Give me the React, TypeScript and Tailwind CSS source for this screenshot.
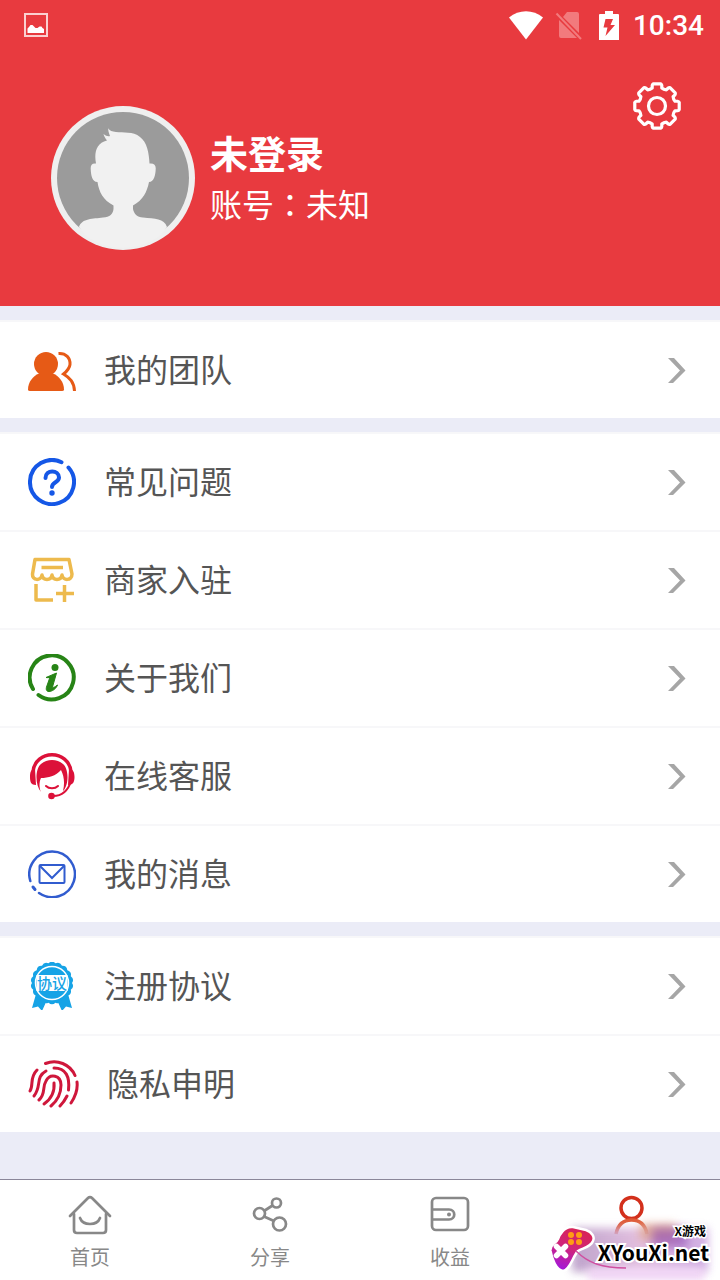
import type { ReactNode } from "react";

const RED = "#e83a3f";

function gearPath(cx: number, cy: number, outer: number, root: number) {
  const point = (r: number, deg: number) => {
    const a = ((deg - 90) * Math.PI) / 180;
    return `${(cx + r * Math.cos(a)).toFixed(2)} ${(cy + r * Math.sin(a)).toFixed(2)}`;
  };
  let d = "";
  for (let i = 0; i < 8; i++) {
    const c = i * 45;
    d += `${i === 0 ? "M" : "L"}${point(root, c - 15)}`;
    d += `L${point(outer - 1, c - 13)}Q${point(outer, c - 12)} ${point(outer + 0.3, c - 9)}`;
    d += `L${point(outer + 0.3, c + 9)}Q${point(outer, c + 12)} ${point(outer - 1, c + 13)}`;
    d += `L${point(root, c + 15)}Q${point(root - 1, c + 22.5)} ${point(root, c + 30)}`;
  }
  return d + "Z";
}

function sealPath(cx: number, cy: number, outer: number, inner: number, lobes: number) {
  const at = (r: number, k: number) => {
    const a = (k * Math.PI) / lobes;
    return `${(cx + r * Math.sin(a)).toFixed(2)} ${(cy - r * Math.cos(a)).toFixed(2)}`;
  };
  let d = `M${at(inner, -1)}`;
  for (let i = 0; i < lobes; i++) {
    d += `Q${at(outer, i * 2)} ${at(inner, i * 2 + 1)}`;
  }
  return d + "Z";
}

function StatusBar() {
  return (
    <div className="flex h-[52px] items-center justify-between pr-4 pl-6">
      <svg width="24" height="26" viewBox="0 0 24 26" aria-hidden="true">
        <rect x="1" y="1" width="22" height="22" fill="none" stroke="#fbd0d0" strokeWidth="2" />
        <path d="M3.500 20v-4.500l1.500-1.500 1.500-2h2l2 2 1 1h2l2-1.500h2l1 1.500 1.500 1v4z" fill="#fff" />
      </svg>
      <div className="flex items-center">
        <svg width="34" height="31" viewBox="0 0 34 31" aria-hidden="true">
          <path d="M0 6.500C10-2 24-2 34 6.500L17 28.500z" fill="#fff" />
        </svg>
        <svg className="ml-3" width="28" height="30" viewBox="0 0 28 30" aria-hidden="true">
          <path d="M12 1h10a2 2 0 0 1 2 2v19L8 6zM4 9l18 18H6a2 2 0 0 1-2-2z" fill="#f27a7d" />
          <path d="M1.500 2.500L26 28" stroke="#f27a7d" strokeWidth="2" />
        </svg>
        <svg className="ml-4" width="20" height="30" viewBox="0 0 20 30" aria-hidden="true">
          <path d="M6 0h8v3h5a1 1 0 0 1 1 1v25H0V4a1 1 0 0 1 1-1h5z" fill="#fff" />
          <path d="M6.500 8H14l-2.500 6H16L6.500 25l2-8.500H4.500z" fill={RED} />
        </svg>
        <span className="ml-[14px] font-[Roboto,sans-serif] text-[28px] leading-8 font-medium">10:34</span>
      </div>
    </div>
  );
}

function Avatar() {
  return (
    <svg width="144" height="144" viewBox="0 0 144 144" aria-hidden="true">
      <circle cx="72" cy="72" r="72" fill="#efefef" />
      <circle cx="72" cy="72" r="66" fill="#9b9b9b" />
      <path
        d="M57.300 22.300C59 25 61 25.500 65 26C72 27 82 25 89 31C96 36 98 47 98.500 57.500C103 57 105 59 104.700 63C104.500 69 103 76 98 76C96 86 92 94 82 99.500V103C83 108 86 111 92 111.500C104 113 113 112 116 121L110 129C88 146 56 146 34 129L28 121C31 112 42 113 52 111.500C59 111 62 108 62.500 103V99.500C52 94 48 86 46.500 76C41 76 40 69 39.700 63C39.500 59 41 57 45 57.500C43 47 45 37 56 34.500C54 32 53 30 52.500 28C55 30 57 30.500 59 30C58 27 57 25 57.300 22.300Z"
        fill="#f1f1f1"
      />
    </svg>
  );
}

function TeamIcon() {
  return (
    <svg width="48" height="48" viewBox="0 0 48 48" fill="none" aria-hidden="true">
      <circle cx="18" cy="18" r="12" fill="#e65a16" />
      <path d="M0 43.500C0 36 5 30 11 27.500H25C31 30 36 36 36 43.500Q36 45 34 45H2Q0 45 0 43.500z" fill="#e65a16" />
      <path d="M30.500 7.500C38 7 42.500 12 42 18.500C41.500 23 38 26 35.500 28C42 32 46 36 46.500 45" stroke="#e65a16" strokeWidth="3" />
    </svg>
  );
}

function QuestionIcon() {
  return (
    <svg width="48" height="48" viewBox="0 0 48 48" fill="none" stroke="#1557e6" strokeLinecap="round" aria-hidden="true">
      <path d="M33.500 4.200A22 22 0 1 0 40.500 9.500" strokeWidth="4" />
      <path d="M17.500 20C17.500 11 31 11.500 31 19.500C31 24.500 24 24 24 29" strokeWidth="4" />
      <circle cx="24" cy="35" r="2.700" fill="#1557e6" stroke="none" />
    </svg>
  );
}

function ShopIcon() {
  return (
    <svg width="48" height="48" viewBox="0 0 48 48" fill="none" stroke="#edba4d" strokeWidth="3.500" strokeLinejoin="round" aria-hidden="true">
      <path d="M7 3.500H41L44 18C44 25 35 25 34 19C33 25 25 25 24 19C23 25 15 25 14 19C13 25 4 25 4.500 18z" />
      <path d="M13.500 11.500H35" />
      <path d="M8 28V44H25M36.500 29V46M28 37.500H46" />
    </svg>
  );
}

function InfoIcon() {
  return (
    <svg width="48" height="48" viewBox="0 0 48 48" fill="none" stroke="#278416" aria-hidden="true">
      <path d="M5 35A22 22 0 1 1 10.500 41" strokeWidth="4" strokeLinecap="round" />
      <circle cx="27" cy="13.500" r="3.500" fill="#278416" stroke="none" />
      <path d="M18 23.500L28.500 19L24.500 33C25 34 27 33 29.500 31C28 35 24 37.500 21 37.500C18 37.500 18 35 18.500 33L21.500 24.500C21 23 19.500 24 18 23.500Z" fill="#278416" stroke="#278416" />
    </svg>
  );
}

function ServiceIcon() {
  return (
    <svg width="48" height="48" viewBox="0 0 48 48" fill="none" aria-hidden="true">
      <path d="M5 20C7-3 41-3 43 20" stroke="#dc1139" strokeWidth="3.500" />
      <path d="M7 17C3 17 2 20 2 25C2 30 3 33 8 33zM41 17C45 17 46.500 20 46.500 25C46.500 30 45 33 40 33z" fill="#dc1139" />
      <path d="M13 40C7 33 7 17 13 12C19 6.500 29 6.500 35 12C41 17 41 33 35 39C37 31 36 24 33 18C28 24 20 26 13 26C11 30 11 36 13 40z" fill="#dc1139" />
      <path d="M18 34C21 37 27 37 30 34" stroke="#dc1139" strokeWidth="2" strokeLinecap="round" />
      <path d="M43 29C40 39 34 44 25 44" stroke="#dc1139" strokeWidth="2" />
      <circle cx="23.500" cy="44" r="3.300" fill="#dc1139" />
    </svg>
  );
}

function MailIcon() {
  return (
    <svg width="48" height="48" viewBox="0 0 48 48" fill="none" stroke="#315ccf" strokeWidth="2.500" strokeLinecap="round" aria-hidden="true">
      <path d="M2.300 31A22.800 22.800 0 1 1 11 43" />
      <path d="M5 37L7 39.500" strokeWidth="3" />
      <rect x="11.500" y="15" width="25" height="18" rx="1" strokeWidth="2" />
      <path d="M12 16L24 28L36 16" strokeWidth="2" />
    </svg>
  );
}

function AgreementIcon() {
  return (
    <svg width="48" height="48" viewBox="0 0 48 48" aria-hidden="true">
      <path d="M8 32L4 46L10 44.500L14 49L19 38zM40 32L44 46L38 44.500L34 49L29 38z" fill="#16a3e6" />
      <path d={sealPath(24, 21, 23, 20, 18)} fill="#16a3e6" />
      <circle cx="24" cy="21" r="16.500" fill="#16a3e6" stroke="#fff" strokeWidth="1.500" />
      <path d="M8.500 13H39.500V29H8.500z" fill="#fff" />
      <text x="24" y="26.500" textAnchor="middle" fontSize="15" fontWeight="500" fontFamily="'Noto Sans CJK SC', sans-serif" fill="#16a3e6">
        协议
      </text>
    </svg>
  );
}

function FingerprintIcon() {
  return (
    <svg width="51" height="48" viewBox="0 0 51 48" fill="none" stroke="#cf173b" strokeWidth="3" strokeLinecap="round" aria-hidden="true">
      <path d="M17.500 3.500C29-1 42 4 47 15.500" />
      <path d="M9 10C1 18 6 25 2 31" />
      <path d="M18 11C7 17 14 26 6 36" />
      <path d="M26 8C38 8 42 17 40.500 30" />
      <path d="M49 22C50 30 47 37 43 43" />
      <path d="M11 40C18 34 14 27 18 21C22 13 33 15 33 25C33 35 29 41 23 46" />
      <path d="M26 23C27 33 23 39 16 44" />
      <path d="M39 36C37 40 35 43 32 46" />
    </svg>
  );
}

function Row({ icon, label }: { icon: ReactNode; label: string }) {
  return (
    <li>
      <a href="#" className="flex h-[98px] items-center gap-7 border-t-2 border-[#f7f7f9] bg-white pr-[34px] pl-7">
        {icon}
        <span className="flex-1 pb-1 text-[32px] leading-10 text-[#555]">{label}</span>
        <svg width="18" height="26" viewBox="0 0 18 26" aria-hidden="true">
          <path d="M0 1H6L17.500 13.500L5 26H0L12 13.500z" fill="#a6a6a6" />
        </svg>
      </a>
    </li>
  );
}

function Tab({ label, children }: { label: string; children: ReactNode }) {
  return (
    <a href="#" className="flex flex-1 flex-col items-center gap-[7px] pt-[14px] text-xl leading-7 text-[#888]">
      {children}
      <span>{label}</span>
    </a>
  );
}

function TabBar() {
  return (
    <nav className="relative mt-auto flex h-[101px] overflow-hidden border-t border-[#8a8699] bg-white">
      <Tab label="首页">
        <svg width="44" height="42" viewBox="0 0 44 42" fill="none" stroke="#888" strokeWidth="2.700" strokeLinecap="round" strokeLinejoin="round" aria-hidden="true">
          <path d="M2 22L20 4Q22 2 24 4L42 22" />
          <path d="M6 20V36Q6 39 9 39H35Q38 39 38 36V20" />
          <path d="M12 24C15 32 29 32 32 24" />
        </svg>
      </Tab>
      <Tab label="分享">
        <svg width="44" height="42" viewBox="0 0 44 42" fill="none" stroke="#888" strokeWidth="2.700" aria-hidden="true">
          <circle cx="11.500" cy="19.500" r="5.500" />
          <circle cx="28.500" cy="9" r="4.500" />
          <circle cx="31.500" cy="30" r="6.500" />
          <path d="M16 17L24.500 11.500M16 22.500L26 27" />
        </svg>
      </Tab>
      <Tab label="收益">
        <svg width="44" height="42" viewBox="0 0 44 42" fill="none" stroke="#888" strokeWidth="2.700" aria-hidden="true">
          <rect x="4" y="4" width="36" height="32" rx="4" />
          <path d="M4 15.500H21C28 15.500 28 25.500 21 25.500H4" />
          <circle cx="21" cy="20.500" r="2" fill="#888" stroke="none" />
        </svg>
      </Tab>
      <a href="#" aria-label="我的" className="flex flex-1 flex-col items-center pt-[14px]">
        <svg width="44" height="42" viewBox="0 0 44 42" fill="none" strokeWidth="3.500" aria-hidden="true">
          <circle cx="23.500" cy="14" r="10.500" stroke="#d3301c" />
          <path d="M8 40C10 30 15 26 23.500 26C32 26 37 30 39 40" stroke="#df5a35" />
        </svg>
      </a>
      <Watermark />
    </nav>
  );
}

function Watermark() {
  return (
    <div className="pointer-events-none absolute right-0 bottom-0 h-[60px] w-[172px]">
      <div className="absolute top-2 right-3 bottom-2 left-6 bg-linear-to-r from-[#b79ac6] via-[#e0b8dc] to-[#cba6e0] opacity-90 blur-[4px]" />
      <div className="absolute right-4 bottom-0 left-10 h-3 bg-[#f0d3f5] blur-[4px]" />
      <div className="absolute top-1 left-[92px] h-4 w-9 bg-[#dfa27c] opacity-70 blur-[5px]" />
      <div className="absolute top-2 right-8 h-5 w-9 bg-[#8d48b4] opacity-60 blur-[5px]" />
      <svg className="absolute top-1 left-0" width="48" height="50" viewBox="0 0 48 50" aria-hidden="true">
        <defs>
          <linearGradient id="pad" x1="0.700" y1="0" x2="0.300" y2="1">
            <stop offset="0" stopColor="#d92352" />
            <stop offset="0.500" stopColor="#d0257a" />
            <stop offset="1" stopColor="#a217dd" />
          </linearGradient>
        </defs>
        <path d="M14 8C17 4 21 2.500 25 3L38 6C44 8 47 13 45 17C43 23 35 24 30 27C25 32 22 46 15 47C8 46 4 35 2.500 27C1.500 20 8 20 10 15C11 12 12 10 14 8z" fill="url(#pad)" stroke="#fff" strokeWidth="2.500" />
        <g fill="#ff9d14">
          <circle cx="23" cy="11" r="3" />
          <circle cx="31" cy="11" r="3" />
          <circle cx="23" cy="18" r="3" />
          <circle cx="31" cy="18" r="3" />
        </g>
        <path d="M8.500 22.500L17.500 31.500M17.500 22.500L8.500 31.500" stroke="#fff" strokeWidth="5.500" strokeLinecap="round" />
      </svg>
      <svg className="absolute bottom-2 left-7" width="100" height="24" viewBox="0 0 100 24" fill="none" aria-hidden="true">
        <path d="M0 3C12 15 26 20 50 20" stroke="#d04fa0" strokeWidth="1.500" />
      </svg>
      <span className="absolute top-[3px] right-[14px] text-[12px] leading-4 font-bold whitespace-nowrap text-black [paint-order:stroke_fill] [-webkit-text-stroke:3px_#fff]">
        X游戏
      </span>
      <span className="absolute top-5 right-[11px] text-[21px] leading-6 font-bold whitespace-nowrap text-black [paint-order:stroke_fill] [-webkit-text-stroke:4px_#fff]">
        XYouXi.net
      </span>
    </div>
  );
}

export default function App() {
  return (
    <div className="flex min-h-screen flex-col bg-[#ebecf7] font-['Noto_Sans_CJK_SC',sans-serif]">
      <header className="bg-[#e83a3f] pb-14 text-white">
        <StatusBar />
        <div className="flex items-start pt-[30px] pr-[39px] pl-[51px]">
          <div className="mt-6 flex flex-1 items-center gap-[15px]">
            <Avatar />
            <div className="pb-[2px]">
              <h1 className="text-[38px] leading-[52px] font-bold">未登录</h1>
              <p className="text-[32px] leading-[50px]">
                账号<span className="inline-block w-8 text-center font-['Noto_Sans_CJK_TC',sans-serif]">：</span>未知
              </p>
            </div>
          </div>
          <button type="button" aria-label="设置">
            <svg width="48" height="48" viewBox="0 0 48 48" fill="none" stroke="#fff" strokeWidth="3.200" strokeLinejoin="round" aria-hidden="true">
              <path d={gearPath(24, 24, 22.2, 18.6)} />
              <circle cx="24" cy="24" r="8.500" />
            </svg>
          </button>
        </div>
      </header>
      <main className="flex flex-col gap-[14px] pt-[14px]">
        <ul>
          <Row icon={<TeamIcon />} label="我的团队" />
        </ul>
        <ul>
          <Row icon={<QuestionIcon />} label="常见问题" />
          <Row icon={<ShopIcon />} label="商家入驻" />
          <Row icon={<InfoIcon />} label="关于我们" />
          <Row icon={<ServiceIcon />} label="在线客服" />
          <Row icon={<MailIcon />} label="我的消息" />
        </ul>
        <ul>
          <Row icon={<AgreementIcon />} label="注册协议" />
          <Row icon={<FingerprintIcon />} label="隐私申明" />
        </ul>
      </main>
      <TabBar />
    </div>
  );
}
